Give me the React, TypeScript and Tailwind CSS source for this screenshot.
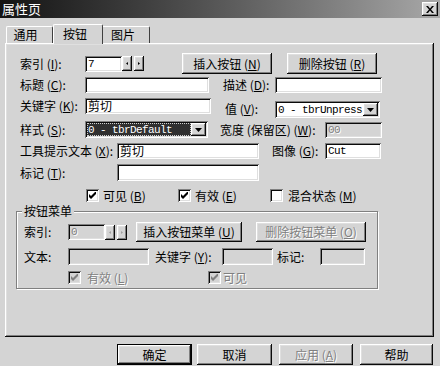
import React from 'react';

const raised = 'shadow-[inset_-1px_-1px_#0a0a0a,inset_1px_1px_#ffffff,inset_-2px_-2px_#808080,inset_2px_2px_#dfdfdf]';
const sunken = 'shadow-[inset_1px_1px_#808080,inset_-1px_-1px_#ffffff,inset_2px_2px_#0a0a0a,inset_-2px_-2px_#dfdfdf]';
const dim = 'text-[#808080] [text-shadow:1px_1px_0_#ffffff]';
const mono = "font-['Liberation_Mono',monospace] text-[11px] tracking-[-0.6px]";

function Lbl({ t, k, cls = '', colon = true }: { t: string; k?: string; cls?: string; colon?: boolean }) {
  return (
    <span className={`shrink-0 whitespace-nowrap ${cls}`}>
      {t}
      {k && <> (<u>{k}</u>)</>}
      {colon && ':'}
    </span>
  );
}

function Field({ value, cls = '', disabled, cjk }: { value?: string; cls?: string; disabled?: boolean; cjk?: boolean }) {
  return (
    <div className={`shrink-0 flex items-center pl-[3px] ${sunken} ${disabled ? 'bg-[#d4d4d4]' : 'bg-white'} ${cls}`}>
      {value && <span className={`${cjk ? 'text-[12px]' : mono} ${disabled ? dim : ''}`}>{value}</span>}
    </div>
  );
}

function Select({ value, cls = '', selected }: { value: string; cls?: string; selected?: boolean }) {
  return (
    <div className={`shrink-0 flex items-stretch bg-white p-[2px] ${sunken} ${cls}`}>
      <div className={`flex-1 flex items-center pl-[1px] ${mono} ${selected ? 'bg-[#303030] text-white outline-1 outline-dotted outline-[#d0d0d0] -outline-offset-1' : ''}`}>
        {value}
      </div>
      <div className={`w-[15px] bg-[#d4d4d4] flex items-center justify-center ${raised}`}>
        <svg width="7" height="4" viewBox="0 0 7 4"><path d="M0 0h7L3.5 4z" fill="#000" /></svg>
      </div>
    </div>
  );
}

function Spin({ disabled }: { disabled?: boolean }) {
  const c = disabled ? '#a0a0a0' : '#000';
  return (
    <div className="flex items-center shrink-0">
      <Field value={disabled ? '0' : '7'} disabled={disabled} cls="w-[37px] h-[16px]" />
      <div className={`w-[10px] h-[15px] bg-[#d4d4d4] flex items-center justify-center ${raised}`}>
        <svg width="2" height="3" viewBox="0 0 2 3"><path d="M2 0v3L0 1.5z" fill={c} /></svg>
      </div>
      <div className={`w-[10px] h-[15px] ml-[2px] bg-[#d4d4d4] flex items-center justify-center ${raised}`}>
        <svg width="2" height="3" viewBox="0 0 2 3"><path d="M0 0v3l2-1.5z" fill={c} /></svg>
      </div>
    </div>
  );
}

function Btn({ children, cls = '', disabled, def }: { children: React.ReactNode; cls?: string; disabled?: boolean; def?: boolean }) {
  return (
    <div className={`shrink-0 flex items-center justify-center bg-[#d4d4d4] ${raised} ${def ? 'border border-black' : ''} ${disabled ? dim : ''} ${cls}`}>
      {children}
    </div>
  );
}

function Check({ checked, disabled }: { checked?: boolean; disabled?: boolean }) {
  return (
    <div className={`w-[13px] h-[13px] shrink-0 flex items-center justify-center ${sunken} ${disabled ? 'bg-[#d4d4d4]' : 'bg-white'}`}>
      {checked && (
        <svg width="7" height="7" viewBox="0 0 7 7">
          <polygon points="0,2 2,4 7,-1 7,2 2,7 0,5" fill={disabled ? '#808080' : '#000'} />
        </svg>
      )}
    </div>
  );
}

export default function App() {
  return (
    <div className="w-[440px] h-[366px] overflow-hidden bg-[#d4d4d4] text-black text-[12px] leading-[14px] font-['Noto_Sans_CJK_SC',sans-serif]">
      {/* title bar */}
      <div className="h-[18px] flex items-center justify-between pl-[2px] pr-[2px] bg-linear-to-r from-[#141414] to-[#a8a8a8]">
        <span className="text-white text-[13px]">属性页</span>
        <div className={`w-[16px] h-[14px] bg-[#d4d4d4] flex items-center justify-center ${raised}`}>
          <svg width="8" height="7" viewBox="0 0 8 7">
            <path d="M0 0h2l2 2.5L6 0h2L5 3.5 8 7H6L4 4.5 2 7H0l3-3.5z" fill="#000" />
          </svg>
        </div>
      </div>

      {/* tabs */}
      <div className="h-[25px] flex items-end pl-[6px]">
        <div className="h-[17px] w-[47px] flex items-center justify-center border-t border-l border-white border-r border-r-[#404040] rounded-tl-[2px] rounded-tr-[2px]">
          <span className="-ml-[8px]">通用</span>
        </div>
        <div className="relative z-10 -mb-[1px] h-[20px] w-[50px] bg-[#d4d4d4] flex items-center justify-center border-t border-l border-white border-r border-r-[#404040] rounded-tl-[2px] rounded-tr-[2px]">
          <span className="-ml-[6px] -mt-[2px]">按钮</span>
        </div>
        <div className="h-[17px] w-[47px] flex items-center justify-center border-t border-white border-r border-r-[#404040] rounded-tr-[2px]">
          <span className="-ml-[6px]">图片</span>
        </div>
      </div>

      {/* panel */}
      <div className={`ml-[5px] w-[429px] h-[294px] flex flex-col ${raised}`}>
        <div className="mt-[10px] h-[21px] flex items-center pl-[15px]">
          <Lbl t="索引" k="I" cls="w-[65px]" />
          <Spin />
          <Btn cls="ml-[38px] w-[90px] h-[21px]">插入按钮 (<u>N</u>)</Btn>
          <Btn cls="ml-[15px] w-[90px] h-[21px]">删除按钮 (<u>R</u>)</Btn>
        </div>

        <div className="mt-[3px] h-[16px] flex items-center pl-[15px]">
          <Lbl t="标题" k="C" cls="w-[65px]" />
          <Field cls="w-[124px] h-[16px]" />
          <Lbl t="描述" k="D" cls="ml-[14px] w-[52px]" />
          <Field cls="w-[107px] h-[16px]" />
        </div>

        <div className="mt-[5px] h-[19px] flex items-start pl-[15px]">
          <div className="w-[65px] h-[16px] flex items-center"><Lbl t="关键字" k="K" /></div>
          <Field value="剪切" cjk cls="w-[126px] h-[16px]" />
          <div className="ml-[14px] mt-[3px] w-[50px] h-[16px] flex items-center"><Lbl t="值" k="V" /></div>
          <Select value="0 - tbrUnpress" cls="mt-[3px] w-[105px] h-[17px]" />
        </div>

        <div className="mt-[4px] h-[17px] flex items-center pl-[15px]">
          <Lbl t="样式" k="S" cls="w-[65px]" />
          <Select value="0 - tbrDefault" selected cls="w-[123px] h-[17px]" />
          <Lbl t="宽度 (保留区)" k="W" cls="ml-[12px] w-[105px]" />
          <Field value="00" disabled cls="w-[57px] h-[16px]" />
        </div>

        <div className="mt-[5px] h-[16px] flex items-center pl-[15px]">
          <Lbl t="工具提示文本" k="X" cls="w-[97px]" />
          <Field value="剪切" cjk cls="w-[142px] h-[16px]" />
          <Lbl t="图像" k="G" cls="ml-[13px] w-[53px]" />
          <Field value="Cut" cls="w-[56px] h-[16px]" />
        </div>

        <div className="mt-[5px] h-[17px] flex items-center pl-[15px]">
          <Lbl t="标记" k="T" cls="w-[97px]" />
          <Field cls="w-[142px] h-[17px]" />
        </div>

        <div className="mt-[8px] h-[13px] flex items-center pl-[81px]">
          <div className="w-[92px] flex items-center gap-[4px]"><Check checked /><Lbl t="可见" k="B" colon={false} /></div>
          <div className="w-[92px] flex items-center gap-[4px]"><Check checked /><Lbl t="有效" k="E" colon={false} /></div>
          <div className="flex items-center gap-[5px]"><Check /><Lbl t="混合状态" k="M" colon={false} /></div>
        </div>

        {/* group box */}
        <div className="relative mt-[9px] ml-[11px] w-[362px] h-[78px] border border-[#808080] shadow-[inset_1px_1px_#ffffff,1px_1px_#ffffff] flex flex-col">
          <span className="absolute -top-[8px] left-[5px] px-[2px] bg-[#d4d4d4]">按钮菜单</span>
          <div className="mt-[10px] h-[20px] flex items-center pl-[7px]">
            <Lbl t="索引" cls="w-[44px]" />
            <Spin disabled />
            <Btn cls="ml-[9px] w-[106px] h-[20px]">插入按钮菜单 (<u>U</u>)</Btn>
            <Btn disabled cls="ml-[14px] w-[110px] h-[20px]">删除按钮菜单 (<u>O</u>)</Btn>
          </div>
          <div className="mt-[6px] h-[17px] flex items-center pl-[7px]">
            <Lbl t="文本" cls="w-[44px]" />
            <Field disabled cls="w-[81px] h-[17px]" />
            <Lbl t="关键字" k="Y" cls="ml-[6px] w-[67px]" />
            <Field disabled cls="w-[51px] h-[17px]" />
            <Lbl t="标记" cls="ml-[4px] w-[43px]" />
            <Field disabled cls="w-[45px] h-[17px]" />
          </div>
          <div className={`mt-[6px] h-[13px] flex items-center pl-[51px] ${dim}`}>
            <div className="w-[140px] flex items-center gap-[6px]"><Check checked disabled /><Lbl t="有效" k="L" colon={false} /></div>
            <div className="flex items-center gap-[2px]"><Check checked disabled /><Lbl t="可见" colon={false} /></div>
          </div>
        </div>
      </div>

      {/* dialog buttons */}
      <div className="mt-[7px] h-[21px] flex items-center pl-[117px]">
        <Btn def cls="w-[75px] h-[21px]">确定</Btn>
        <Btn cls="ml-[5px] w-[75px] h-[21px]">取消</Btn>
        <Btn disabled cls="ml-[7px] w-[74px] h-[21px]">应用 (<u>A</u>)</Btn>
        <Btn cls="ml-[7px] w-[73px] h-[21px]">帮助</Btn>
      </div>
    </div>
  );
}
